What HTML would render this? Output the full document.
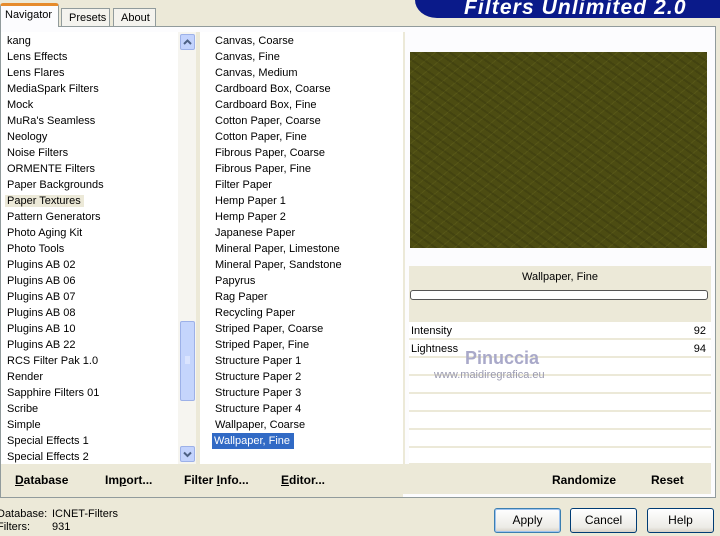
<!DOCTYPE html>
<html><head><style>
*{margin:0;padding:0;box-sizing:border-box}
body{width:720px;height:536px;background:#ece9d8;font-family:"Liberation Sans",sans-serif;font-size:11px;color:#000;position:relative;overflow:hidden}
.a{position:absolute}
.list div{height:16px;line-height:16px;padding-left:7px;white-space:nowrap}
.mid div{padding-left:15px}
.row{position:absolute;left:409px;width:302px;height:16px;background:#fff;line-height:18px;padding:0 5px 0 2px}
.btn{position:absolute;top:508px;height:25px;border:1px solid #003c74;border-radius:3px;background:linear-gradient(#fff,#ecebe6 80%,#d6d0c5);text-align:center;line-height:23px;font-size:12px}
.b{font-weight:bold;font-size:12px}
.arr{position:absolute;left:180px;width:15px;height:16px;background:#c3d3fd;border:1px solid #9db1e8;border-radius:2px}
</style></head><body>
<div class="a" style="left:415px;top:0;width:305px;height:18px;background:#0a1a8a;border-bottom-left-radius:22px 18px"></div>
<div class="a" style="left:464px;top:-4px;color:#fff;font-weight:bold;font-style:italic;font-size:21px;letter-spacing:1.1px">Filters Unlimited 2.0</div>
<div class="a" style="left:0;top:26px;width:716px;height:472px;background:#fcfcfe;border:1px solid #919b9c"></div>
<div class="a" style="left:0;top:3px;width:59px;height:24px;background:#fcfcfe;border:1px solid #919b9c;border-bottom:none;border-top:3px solid #e68b2c;border-radius:3px 3px 0 0;padding:3px 0 0 4px">Navigator</div>
<div class="a" style="left:61px;top:8px;width:49px;height:18px;background:#f4f3ee;border:1px solid #919b9c;border-bottom:none;padding:3px 0 0 7px">Presets</div>
<div class="a" style="left:113px;top:8px;width:43px;height:18px;background:#f4f3ee;border:1px solid #919b9c;border-bottom:none;padding:3px 0 0 7px">About</div>
<div class="a" style="left:1px;top:32px;width:177px;height:432px;background:#fff"></div>
<div class="a" style="left:178px;top:32px;width:18px;height:432px;background:#f6f5f0"></div>
<div class="arr" style="top:34px"><svg width="13" height="14" viewBox="0 0 13 14"><path d="M3 9 L6.5 5.5 L10 9" stroke="#4d6185" stroke-width="2" fill="none"/></svg></div>
<div class="a" style="left:180px;top:321px;width:15px;height:80px;background:#c5d5fc;border:1px solid #9db1e8;border-radius:2px"><svg width="13" height="78"><path d="M4 35h5M4 37h5M4 39h5M4 41h5" stroke="#eef3ff" stroke-width="1"/></svg></div>
<div class="arr" style="top:446px"><svg width="13" height="14" viewBox="0 0 13 14"><path d="M3 5.5 L6.5 9 L10 5.5" stroke="#4d6185" stroke-width="2" fill="none"/></svg></div>
<div class="a" style="left:196px;top:32px;width:4px;height:432px;background:#ece9d8"></div>
<div class="a" style="left:200px;top:32px;width:203px;height:432px;background:#fff"></div>
<div class="a" style="left:403px;top:32px;width:2px;height:462px;background:#ece9d8"></div>
<div class="a list" style="left:0;top:33px">
<div>kang</div><div>Lens Effects</div><div>Lens Flares</div><div>MediaSpark Filters</div><div>Mock</div><div>MuRa's Seamless</div><div>Neology</div><div>Noise Filters</div><div>ORMENTE Filters</div><div>Paper Backgrounds</div><div><span style="background:#ece9d8;margin-left:-2px;padding:0 3px 0 2px">Paper Textures</span></div><div>Pattern Generators</div><div>Photo Aging Kit</div><div>Photo Tools</div><div>Plugins AB 02</div><div>Plugins AB 06</div><div>Plugins AB 07</div><div>Plugins AB 08</div><div>Plugins AB 10</div><div>Plugins AB 22</div><div>RCS Filter Pak 1.0</div><div>Render</div><div>Sapphire Filters 01</div><div>Scribe</div><div>Simple</div><div>Special Effects 1</div><div>Special Effects 2</div>
</div>
<div class="a list mid" style="left:200px;top:33px">
<div>Canvas, Coarse</div><div>Canvas, Fine</div><div>Canvas, Medium</div><div>Cardboard Box, Coarse</div><div>Cardboard Box, Fine</div><div>Cotton Paper, Coarse</div><div>Cotton Paper, Fine</div><div>Fibrous Paper, Coarse</div><div>Fibrous Paper, Fine</div><div>Filter Paper</div><div>Hemp Paper 1</div><div>Hemp Paper 2</div><div>Japanese Paper</div><div>Mineral Paper, Limestone</div><div>Mineral Paper, Sandstone</div><div>Papyrus</div><div>Rag Paper</div><div>Recycling Paper</div><div>Striped Paper, Coarse</div><div>Striped Paper, Fine</div><div>Structure Paper 1</div><div>Structure Paper 2</div><div>Structure Paper 3</div><div>Structure Paper 4</div><div>Wallpaper, Coarse</div><div><span style="background:#316ac5;color:#fff;margin-left:-3px;padding:0 4px 0 2px;display:inline-block;height:16px">Wallpaper, Fine</span></div>
</div>
<div class="a" style="left:410px;top:52px;width:297px;height:196px;background:repeating-linear-gradient(35deg,rgba(0,0,0,.12) 0 2px,transparent 2px 7px),repeating-linear-gradient(-40deg,rgba(120,120,40,.25) 0 1px,transparent 1px 9px),#4c4c12"></div>
<div class="a" style="left:409px;top:266px;width:302px;height:56px;background:#ece9d8"></div>
<div class="a" style="left:409px;top:271px;width:302px;text-align:center">Wallpaper, Fine</div>
<div class="a" style="left:410px;top:290px;width:298px;height:10px;border:1px solid #555;border-radius:3px;background:#fff"></div>
<div class="a" style="left:409px;top:322px;width:302px;height:142px;background:#ece9d8"></div>
<div class="row" style="top:322px">Intensity<span style="float:right">92</span></div>
<div class="row" style="top:340px">Lightness<span style="float:right">94</span></div>
<div class="row" style="top:358px"></div><div class="row" style="top:376px"></div><div class="row" style="top:394px"></div><div class="row" style="top:412px"></div><div class="row" style="top:430px"></div><div class="row" style="top:448px;height:15px"></div>
<div class="a" style="left:465px;top:348px;color:#a9a9c9;font-size:18px;font-weight:bold">Pinuccia</div>
<div class="a" style="left:434px;top:369px;color:#9a9ab0;font-size:11px">www.maidiregrafica.eu</div>
<div class="a" style="left:1px;top:464px;width:402px;height:33px;background:#ece9d8"></div>
<div class="a" style="left:405px;top:464px;width:306px;height:30px;background:#ece9d8"></div>
<div class="a b" style="left:15px;top:473px"><u>D</u>atabase</div>
<div class="a b" style="left:105px;top:473px">Im<u>p</u>ort...</div>
<div class="a b" style="left:184px;top:473px">Filter <u>I</u>nfo...</div>
<div class="a b" style="left:281px;top:473px"><u>E</u>ditor...</div>
<div class="a b" style="left:552px;top:473px">Randomize</div>
<div class="a b" style="left:651px;top:473px">Reset</div>
<div class="a" style="left:-3px;top:508px;line-height:13px;font-size:11px">Database:<br>Filters:</div>
<div class="a" style="left:52px;top:508px;line-height:13px;font-size:11px">ICNET-Filters<br>931</div>
<div class="btn" style="left:494px;width:67px;border-color:#3c7fb1;box-shadow:inset 0 0 0 1px #9ec3ef">Apply</div>
<div class="btn" style="left:570px;width:67px">Cancel</div>
<div class="btn" style="left:647px;width:67px">Help</div>
</body></html>
